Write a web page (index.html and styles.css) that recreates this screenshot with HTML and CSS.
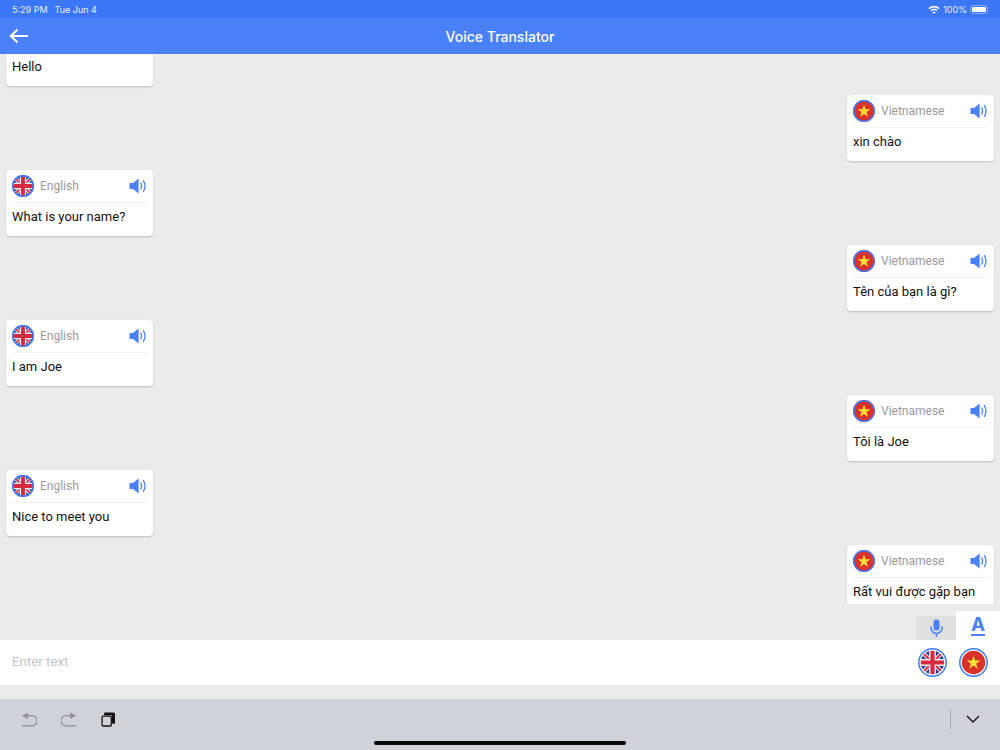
FILE: index.html
```html
<!DOCTYPE html>
<html lang="en">
<head>
   <meta charset="UTF-8">
   <meta name="viewport" content="width=device-width, initial-scale=1.0">
   <title>Voice Translator</title>
   <link rel="stylesheet" href="styles.css">
</head>
<body>
   <!-- shared icons -->
   <svg class="defs" width="0" height="0">
       <clipPath id="flag-clip"><circle cx="12" cy="12" r="12"/></clipPath>
       <g id="art-uk">
           <circle cx="12" cy="12" r="12" fill="#233a8b"/>
           <g clip-path="url(#flag-clip)">
               <path d="M2 2 22 22M22 2 2 22" stroke="#f4f0f2" stroke-width="4"/>
               <path d="M2 2 22 22M22 2 2 22" stroke="#d9283f" stroke-width="2"/>
               <path d="M12 0V24M0 12H24" stroke="#f4f0f2" stroke-width="7"/>
               <path d="M12 0V24M0 12H24" stroke="#d9283f" stroke-width="4.2"/>
           </g>
       </g>
       <g id="art-vn">
           <circle cx="12" cy="12" r="12" fill="#d8322a"/>
           <path d="M12 5 13.7 10H19L14.7 13.2 16.3 18.3 12 15.2 7.7 18.3 9.3 13.2 5 10H10.3Z" fill="#fbe134"/>
       </g>
       <symbol id="flag-uk" viewBox="0 0 24 24">
           <use href="#art-uk"/>
           <circle cx="12" cy="12" r="11.2" fill="none" stroke="#3f7cf8" stroke-width="1.6"/>
       </symbol>
       <symbol id="flag-vn" viewBox="0 0 24 24">
           <use href="#art-vn"/>
           <circle cx="12" cy="12" r="11.2" fill="none" stroke="#3f7cf8" stroke-width="1.6"/>
       </symbol>
       <symbol id="flag-uk-big" viewBox="0 0 29 29">
           <use href="#art-uk" transform="translate(2.8 2.8) scale(.975)"/>
           <circle cx="14.5" cy="14.5" r="13.7" fill="none" stroke="#3f7cf8" stroke-width="1.5"/>
       </symbol>
       <symbol id="flag-vn-big" viewBox="0 0 29 29">
           <use href="#art-vn" transform="translate(2.8 2.8) scale(.975)"/>
           <circle cx="14.5" cy="14.5" r="13.7" fill="none" stroke="#3f7cf8" stroke-width="1.5"/>
       </symbol>
       <symbol id="speaker" viewBox="0 0 18 16">
           <path d="M0.5 5H4L9.6 0.6V15.4L4 11H0.5Z" fill="#4a80f8"/>
           <path d="M11.8 5Q13.4 8 11.8 11M14.4 2.6Q17.6 8 14.4 13.4" fill="none" stroke="#4a80f8" stroke-width="1.3" stroke-linecap="round"/>
       </symbol>
   </svg>

   <div class="status-bar">
       <span class="status-time">5:29 PM</span>
       <span class="status-date">Tue Jun 4</span>
       <div class="status-right">
           <svg class="wifi" width="12" height="9" viewBox="0 0 12 9">
               <path d="M0.4 3.1A8 8 0 0 1 11.6 3.1L10.5 4.3A6.4 6.4 0 0 0 1.5 4.3Z" fill="#fff"/>
               <path d="M2.4 5.2A5.2 5.2 0 0 1 9.6 5.2L8.5 6.3A3.6 3.6 0 0 0 3.5 6.3Z" fill="#fff"/>
               <path d="M4.4 7.2A2.4 2.4 0 0 1 7.6 7.2L6 8.9Z" fill="#fff"/>
           </svg>
           <span>100%</span>
           <div class="battery"><div class="battery-fill"></div></div>
       </div>
   </div>

   <div class="header">
       <svg class="back-icon" width="20" height="16" viewBox="0 0 20 16">
           <path d="M19 8H2M8.5 1.5 1.8 8 8.5 14.5" fill="none" stroke="#fff" stroke-width="2"/>
       </svg>
       <h1>Voice Translator</h1>
   </div>

   <div class="chat">
       <div class="chat-list">
           <div class="msg msg-left msg-clipped">
               <div class="msg-text">Hello</div>
           </div>
           <div class="msg msg-right">
               <div class="msg-head">
                   <svg class="flag"><use href="#flag-vn"/></svg>
                   <span class="lang">Vietnamese</span>
                   <svg class="speaker"><use href="#speaker"/></svg>
               </div>
               <div class="msg-text">xin chào</div>
           </div>
           <div class="msg msg-left">
               <div class="msg-head">
                   <svg class="flag"><use href="#flag-uk"/></svg>
                   <span class="lang">English</span>
                   <svg class="speaker"><use href="#speaker"/></svg>
               </div>
               <div class="msg-text">What is your name?</div>
           </div>
           <div class="msg msg-right">
               <div class="msg-head">
                   <svg class="flag"><use href="#flag-vn"/></svg>
                   <span class="lang">Vietnamese</span>
                   <svg class="speaker"><use href="#speaker"/></svg>
               </div>
               <div class="msg-text">Tên của bạn là gì?</div>
           </div>
           <div class="msg msg-left">
               <div class="msg-head">
                   <svg class="flag"><use href="#flag-uk"/></svg>
                   <span class="lang">English</span>
                   <svg class="speaker"><use href="#speaker"/></svg>
               </div>
               <div class="msg-text">I am Joe</div>
           </div>
           <div class="msg msg-right">
               <div class="msg-head">
                   <svg class="flag"><use href="#flag-vn"/></svg>
                   <span class="lang">Vietnamese</span>
                   <svg class="speaker"><use href="#speaker"/></svg>
               </div>
               <div class="msg-text">Tôi là Joe</div>
           </div>
           <div class="msg msg-left">
               <div class="msg-head">
                   <svg class="flag"><use href="#flag-uk"/></svg>
                   <span class="lang">English</span>
                   <svg class="speaker"><use href="#speaker"/></svg>
               </div>
               <div class="msg-text">Nice to meet you</div>
           </div>
           <div class="msg msg-right">
               <div class="msg-head">
                   <svg class="flag"><use href="#flag-vn"/></svg>
                   <span class="lang">Vietnamese</span>
                   <svg class="speaker"><use href="#speaker"/></svg>
               </div>
               <div class="msg-text">Rất vui được gặp bạn</div>
           </div>
       </div>
   </div>

   <div class="tabs">
       <div class="tab tab-mic">
           <svg width="13" height="18" viewBox="0 0 13 18">
               <rect x="3.5" y="0.5" width="6" height="11" rx="3" fill="#4a80f8"/>
               <path d="M1 8V9A5.5 5.5 0 0 0 12 9V8M6.5 14.5V17.5" fill="none" stroke="#4a80f8" stroke-width="1.5" stroke-linecap="round"/>
           </svg>
       </div>
       <div class="tab tab-text">
           <span class="tab-a">A</span>
       </div>
   </div>

   <div class="input-bar">
       <span class="placeholder">Enter text</span>
       <svg class="flag-big"><use href="#flag-uk-big"/></svg>
       <svg class="flag-big"><use href="#flag-vn-big"/></svg>
   </div>

   <div class="spacer"></div>

   <div class="keyboard-bar">
       <svg class="kb-icon" width="16" height="15" viewBox="0 0 16 15">
           <path d="M7 0.5V7L0.8 3.7Z" fill="#8e9096"/>
           <path d="M5 3.7H11A4.4 4.4 0 0 1 11 13.8H1" fill="none" stroke="#8e9096" stroke-width="1.2"/>
       </svg>
       <svg class="kb-icon" width="16" height="15" viewBox="0 0 16 15">
           <path d="M9 0.5V7L15.2 3.7Z" fill="#8e9096"/>
           <path d="M11 3.7H5A4.4 4.4 0 0 0 5 13.8H15" fill="none" stroke="#8e9096" stroke-width="1.2"/>
       </svg>
       <svg class="kb-icon" width="14" height="15" viewBox="0 0 14 15">
           <path d="M4 3V1.2H12.2C12.9 1.2 13.4 1.7 13.4 2.4V11H11.4" fill="none" stroke="#111" stroke-width="1.4"/>
           <path d="M3 1.8H11V3.2H3Z" fill="#111"/>
           <rect x="11" y="2" width="2.4" height="9" fill="#111"/>
           <rect x="1.1" y="4.2" width="9.2" height="9.8" rx="1" fill="none" stroke="#111" stroke-width="1.3"/>
       </svg>
       <div class="kb-right">
           <div class="kb-divider"></div>
           <svg width="14" height="8" viewBox="0 0 14 8">
               <path d="M1 1 7 7 13 1" fill="none" stroke="#111" stroke-width="1.3"/>
           </svg>
       </div>
       <div class="home-indicator"></div>
   </div>
</body>
</html>
```

FILE: styles.css
```css
* {
    margin: 0;
    padding: 0;
    box-sizing: border-box;
}

body {
    width: 1000px;
    height: 750px;
    overflow: hidden;
    display: flex;
    flex-direction: column;
    font-family: Roboto, "Liberation Sans", sans-serif;
    background-color: #ebebeb;
    color: #111;
}

.defs {
    display: block;
    height: 0;
}

.status-bar {
    height: 18px;
    flex-shrink: 0;
    display: flex;
    align-items: center;
    gap: 7px;
    padding: 0 12px;
    background-color: #3b76f6;
    color: #e8efff;
    font-family: Inter, sans-serif;
    font-size: 9px;
}

.status-right {
    margin-left: auto;
    display: flex;
    align-items: center;
    gap: 3px;
}

.battery {
    width: 18px;
    height: 9px;
    padding: 1px;
    border: 1px solid #85a9f9;
    border-radius: 3px;
}

.battery-fill {
    height: 100%;
    background-color: #fff;
    border-radius: 1px;
}

.header {
    position: relative;
    height: 36px;
    flex-shrink: 0;
    display: flex;
    align-items: center;
    justify-content: center;
    background-color: #4a80f8;
    color: white;
}

.header h1 {
    font-family: Inter, sans-serif;
    font-size: 14px;
    font-weight: 500;
}

.back-icon {
    position: absolute;
    left: 9px;
    top: 10px;
}

.chat {
    height: 550px;
    flex-shrink: 0;
    overflow: hidden;
}

.chat-list {
    display: flex;
    flex-direction: column;
    gap: 9px;
    padding: 0 6px;
}

.msg {
    width: 147px;
    height: 66px;
    flex-shrink: 0;
    background: white;
    border-radius: 4px;
    box-shadow: 0 1px 2px rgba(0,0,0,0.2);
    padding: 0 6px;
}

/* first card is scrolled under the header, only its text shows */
.msg-clipped {
    height: 32px;
    border-radius: 0 0 4px 4px;
}

.msg-clipped .msg-text {
    height: 24px;
}

.msg-right {
    align-self: flex-end;
}

.msg-head {
    height: 33px;
    display: flex;
    align-items: center;
    gap: 6px;
    border-bottom: 1px solid #f3f3f3;
}

.flag {
    width: 22px;
    height: 22px;
}

.lang {
    font-size: 12px;
    color: #999;
    margin-bottom: 1px;
}

.speaker {
    width: 18px;
    height: 16px;
    margin-left: auto;
}

.msg-text {
    height: 26px;
    display: flex;
    align-items: center;
    font-size: 13px;
    color: #111;
}

.tabs {
    height: 36px;
    flex-shrink: 0;
    display: flex;
    justify-content: flex-end;
    align-items: flex-end;
}

.tab {
    display: flex;
    align-items: center;
    justify-content: center;
}

.tab-mic {
    width: 40px;
    height: 24px;
    background-color: #e0e0e0;
}

.tab-text {
    width: 44px;
    height: 29px;
    background-color: white;
}

.tab-a {
    font-family: Inter, sans-serif;
    font-size: 19px;
    font-weight: 700;
    line-height: 18px;
    color: #4a80f8;
    border-bottom: 2px solid #4a80f8;
}

.input-bar {
    height: 45px;
    flex-shrink: 0;
    display: flex;
    align-items: center;
    gap: 12px;
    padding: 0 12px;
    background-color: white;
}

.placeholder {
    margin-right: auto;
    margin-bottom: 2px;
    font-size: 13.3px;
    color: #c4c4c6;
}

.flag-big {
    width: 29px;
    height: 29px;
}

.spacer {
    height: 14px;
    flex-shrink: 0;
}

.keyboard-bar {
    position: relative;
    flex: 1;
    display: flex;
    align-items: center;
    gap: 24px;
    padding: 0 20px 11px 21px;
    background-color: #cfd2d9;
}

.kb-right {
    margin-left: auto;
    display: flex;
    align-items: center;
    gap: 15px;
}

.kb-divider {
    width: 1px;
    height: 20px;
    background-color: #a9abb1;
}

.home-indicator {
    position: absolute;
    left: 374px;
    bottom: 5px;
    width: 252px;
    height: 4px;
    border-radius: 2px;
    background-color: #0a0a0a;
}
```
